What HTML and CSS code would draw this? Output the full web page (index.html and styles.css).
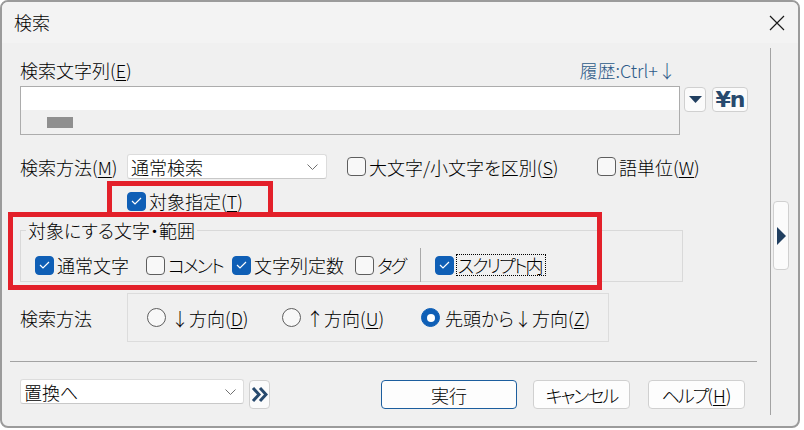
FILE: index.html
```html
<!DOCTYPE html>
<html lang="ja">
<head>
<meta charset="utf-8">
<title>検索</title>
<link rel="stylesheet" href="styles.css">
</head>
<body>
<div class="dialog">
  <div class="titlebar">
    <span class="title">検索</span>
    <svg class="close" width="16" height="16" viewBox="0 0 16 16"><path d="M1 1L15 15M15 1L1 15" stroke="#1a1a1a" stroke-width="1.2" fill="none"/></svg>
  </div>
  <div class="body">
    <div class="main">
      <div class="label-row">
        <span>検索文字列(<u>E</u>)</span>
        <span class="history">履歴:Ctrl+↓</span>
      </div>
      <div class="input-row">
        <div class="textbox">
          <div class="tb-top"></div>
          <span class="thumb"></span>
        </div>
        <button class="ibtn drop"><svg width="13" height="7" viewBox="0 0 13 7"><path d="M0 0H13L6.5 7Z" fill="#213f60"/></svg></button>
        <button class="ibtn yen">¥n</button>
      </div>

      <div class="method-row">
        <span class="lbl">検索方法(<u>M</u>)</span>
        <div class="select sel-method">
          <span>通常検索</span>
          <svg width="11" height="6" viewBox="0 0 11 6"><polyline points="0.5,0.5 5.5,5.5 10.5,0.5" fill="none" stroke="#707070" stroke-width="1"/></svg>
        </div>
        <label class="chk chk-case"><span class="cb"></span><span>大文字/小文字を区別(<u>S</u>)</span></label>
        <label class="chk"><span class="cb"></span><span>語単位(<u>W</u>)</span></label>
      </div>

      <div class="target-row">
        <label class="chk"><span class="cb on"><svg width="11" height="8" viewBox="0 0 11 8"><polyline points="1,4 4,7 10,1" fill="none" stroke="#fff" stroke-width="1.2"/></svg></span><span>対象指定(<u>T</u>)</span></label>
      </div>

      <div class="group">
        <span class="legend">対象にする文字・範囲</span>
        <div class="cb-row">
          <label class="chk"><span class="cb on"><svg width="11" height="8" viewBox="0 0 11 8"><polyline points="1,4 4,7 10,1" fill="none" stroke="#fff" stroke-width="1.2"/></svg></span><span>通常文字</span></label>
          <label class="chk"><span class="cb"></span><span class="kt">コメント</span></label>
          <label class="chk"><span class="cb on"><svg width="11" height="8" viewBox="0 0 11 8"><polyline points="1,4 4,7 10,1" fill="none" stroke="#fff" stroke-width="1.2"/></svg></span><span>文字列定数</span></label>
          <label class="chk"><span class="cb"></span><span class="kt">タグ</span></label>
          <span class="vsep"></span>
          <label class="chk"><span class="cb on"><svg width="11" height="8" viewBox="0 0 11 8"><polyline points="1,4 4,7 10,1" fill="none" stroke="#fff" stroke-width="1.2"/></svg></span><span class="focus kt">スクリプト内</span></label>
        </div>
      </div>

      <div class="dir-row">
        <span class="lbl">検索方法</span>
        <div class="dir-box">
          <label class="rad"><span class="rb"></span><span>↓方向(<u>D</u>)</span></label>
          <label class="rad"><span class="rb"></span><span>↑方向(<u>U</u>)</span></label>
          <label class="rad"><span class="rb on"></span><span>先頭から↓方向(<u>Z</u>)</span></label>
        </div>
      </div>

      <div class="sep"></div>

      <div class="bottom-row">
        <div class="select sel-replace">
          <span>置換へ</span>
          <svg width="11" height="6" viewBox="0 0 11 6"><polyline points="0.5,0.5 5.5,5.5 10.5,0.5" fill="none" stroke="#707070" stroke-width="1"/></svg>
        </div>
        <button class="ibtn more"><svg width="17" height="17" viewBox="0 0 17 17"><path d="M2 2L8 8.5L2 15M9 2L15 8.5L9 15" fill="none" stroke="#27496d" stroke-width="3"/></svg></button>
        <button class="btn primary">実行</button>
        <button class="btn cancel"><span class="kt">キャンセル</span></button>
        <button class="btn help"><span class="kt">ヘルプ</span>(<u>H</u>)</button>
      </div>
    </div>
    <div class="side">
      <button class="side-btn"><svg width="9" height="18" viewBox="0 0 9 18"><path d="M0 0L9 9L0 18Z" fill="#213f60"/></svg></button>
    </div>
  </div>
  <div class="annot a1"></div>
  <div class="annot a2"></div>
</div>
</body>
</html>
```
FILE: styles.css
```css
* { box-sizing: border-box; }

body {
  margin: 0;
  background: #ffffff;
  font-family: "Noto Sans CJK JP", "Noto Sans", sans-serif;
  font-size: 18px;
  font-weight: 300;
  color: #000;
  font-feature-settings: "palt";
}

u { text-decoration: underline; text-underline-offset: 2px; }

.kt { letter-spacing: -2px; }

.dialog {
  position: relative;
  width: 800px;
  height: 428px;
  border: 2px solid #9b9b9b;
  border-radius: 8px;
  overflow: hidden;
  background: #f0f0f0;
  display: flex;
  flex-direction: column;
}

.titlebar {
  height: 41px;
  flex: none;
  background: #f3f3f3;
  display: flex;
  align-items: center;
  justify-content: space-between;
  padding: 0 12px;
}
.title { line-height: 41px; }
.close { margin-right: 1px; }

.body { flex: 1; display: flex; }

.main {
  width: 768px;
  flex: none;
  padding-left: 18px;
  display: flex;
  flex-direction: column;
  align-items: flex-start;
}

.side {
  flex: 1;
  border-left: 1px solid #a3a3a3;
  margin: 5px 0 11px;
}
.side-btn {
  margin: 153px 0 0 2px;
  width: 16px;
  height: 69px;
  padding: 0;
  border: 1px solid #d0d0d0;
  border-radius: 4px;
  background: #fbfbfb;
  display: flex;
  align-items: center;
  justify-content: center;
}

.label-row {
  margin-top: 15px;
  width: 660px;
  height: 24px;
  line-height: 24px;
  display: flex;
  justify-content: space-between;
  align-items: center;
  padding-right: 4px;
}
.history { color: #2c5a88; }

.input-row { margin-top: 4px; display: flex; align-items: flex-start; }
.textbox {
  width: 660px;
  height: 49px;
  border: 1px solid #acacac;
  background: #f0f0f0;
}
.tb-top { height: 23px; background: #fff; }
.thumb {
  display: block;
  width: 26px;
  height: 11px;
  margin: 7px 0 0 26px;
  background: #8f8f8f;
}

.ibtn {
  height: 25px;
  margin-top: 1px;
  padding: 0;
  border: 1px solid #d0d0d0;
  border-radius: 4px;
  background: #fbfbfb;
  display: flex;
  align-items: center;
  justify-content: center;
  font: inherit;
}
.drop { width: 22px; margin-left: 4px; }
.yen {
  width: 36px;
  margin-left: 6px;
  font-family: "DejaVu Sans", sans-serif;
  font-weight: bold;
  font-size: 22px;
  color: #27496d;
  letter-spacing: -1px;
}

.method-row {
  margin-top: 19px;
  height: 25px;
  display: flex;
  align-items: center;
}
.lbl { width: 107px; flex: none; }

.select {
  height: 25px;
  background: #fff;
  border: 1px solid #dcdcdc;
  border-bottom-color: #c8c8c8;
  border-radius: 3px;
  display: flex;
  align-items: center;
  justify-content: space-between;
  padding: 0 8px 0 3px;
}
.sel-method { width: 200px; }
.sel-replace { width: 224px; margin-top: -1px; padding-right: 7px; }

.chk { display: flex; align-items: center; gap: 3px; }
.chk-case { margin-left: 20px; width: 250px; }

.cb {
  width: 19px;
  height: 19px;
  flex: none;
  border: 1px solid #5e5e5e;
  border-radius: 4px;
  background: #f8f8f8;
  display: flex;
  align-items: center;
  justify-content: center;
}
.cb.on { background: #0f5fb6; border-color: #0f5fb6; }

.target-row {
  margin-top: 11px;
  margin-left: 107px;
  height: 22px;
  display: flex;
  align-items: center;
}

.group {
  margin-top: 18px;
  width: 663px;
  height: 52px;
  border: 1px solid #d9d9d9;
  display: flex;
  flex-direction: column;
  align-items: flex-start;
}
.legend {
  margin: -12px 0 0 5px;
  padding: 0 2px;
  line-height: 22px;
  background: #f0f0f0;
}
.cb-row {
  margin-top: 7px;
  padding-left: 14px;
  height: 22px;
  display: grid;
  grid-template-columns: 111px 86px 123px 65px 15px auto;
  align-items: center;
}
.vsep {
  width: 1px;
  height: 34px;
  background: #a9a9a9;
}
.focus {
  outline: 1px dotted #000;
  line-height: 20px;
  padding: 0 3px 0 1px;
}

.dir-row {
  margin-top: 11px;
  display: flex;
  align-items: center;
}
.dir-box {
  width: 482px;
  height: 49px;
  border: 1px solid #dcdcdc;
  padding-left: 19px;
  display: grid;
  grid-template-columns: 135px 139px auto;
  align-items: center;
}
.rad { display: flex; align-items: center; gap: 5px; }
.rb {
  width: 19px;
  height: 19px;
  flex: none;
  border: 1px solid #5e5e5e;
  border-radius: 50%;
  background: #f8f8f8;
  display: flex;
  align-items: center;
  justify-content: center;
}
.rb.on { background: #0f5fb6; border-color: #0f5fb6; }
.rb.on::after {
  content: "";
  width: 8px;
  height: 8px;
  border-radius: 50%;
  background: #fff;
}

.sep {
  margin: 19px 0 0 -10px;
  width: 747px;
  height: 1px;
  background: #a3a3a3;
}

.bottom-row {
  margin-top: 18px;
  display: flex;
  align-items: flex-start;
}
.more { width: 21px; height: 29px; margin: 0 0 0 5px; }
.btn {
  height: 29px;
  width: 97px;
  padding: 0;
  border: 1px solid #d0d0d0;
  border-radius: 4px;
  background: #fdfdfd;
  font: inherit;
  color: #000;
}
.primary { width: 136px; margin-left: 111px; border-color: #1c5e9e; }
.cancel { margin-left: 16px; }
.help { margin-left: 18px; }

.annot {
  position: absolute;
  border: 5px solid #e3202a;
}
.a1 { left: 105px; top: 179px; width: 166px; height: 36px; }
.a2 { left: 6px; top: 210px; width: 594px; height: 78px; }
```
